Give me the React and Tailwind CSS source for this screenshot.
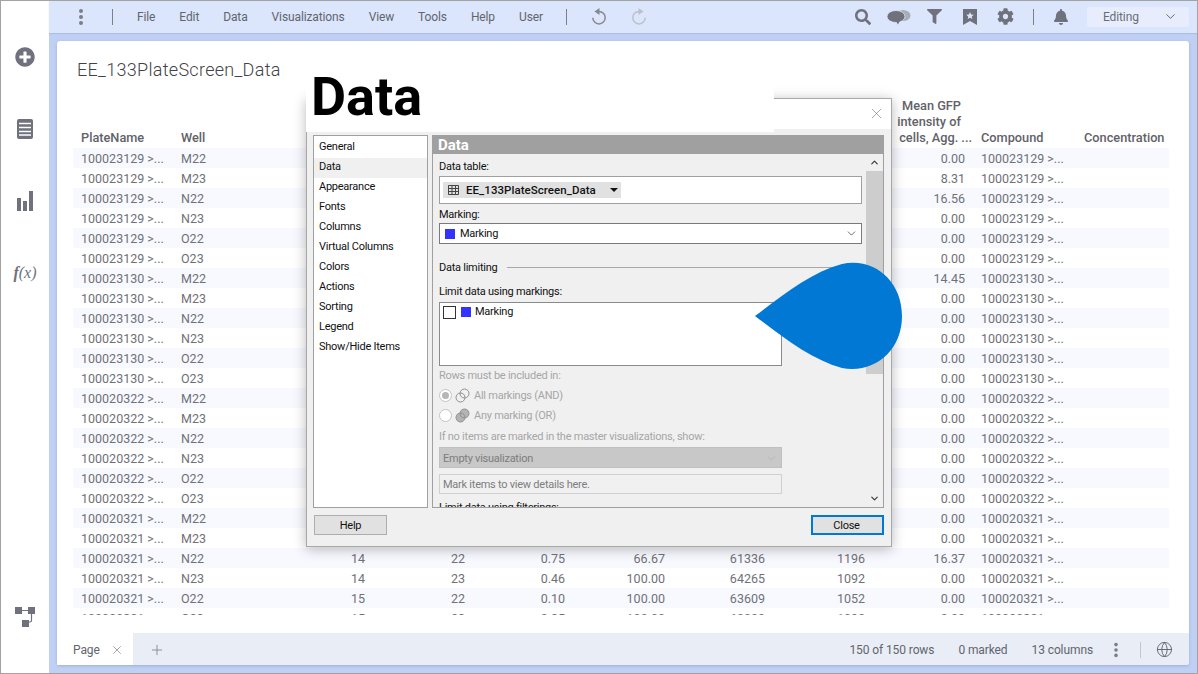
import { ChevronDown, Plus, X, Globe } from "lucide-react";
import { FaSearch, FaFilter, FaCog, FaBell, FaPlusCircle } from "react-icons/fa";

const menus = ["File", "Edit", "Data", "Visualizations", "View", "Tools", "Help", "User"];

const plates = ["100023129", "100023130", "100020322", "100020321"];
const wells = ["M22", "M23", "N22", "N23", "O22", "O23"];
const means = { 1: "8.31", 2: "16.56", 6: "14.45", 20: "16.37" };
const extras = {
  20: ["14", "22", "0.75", "66.67", "61336", "1196"],
  21: ["14", "23", "0.46", "100.00", "64265", "1092"],
  22: ["15", "22", "0.10", "100.00", "63609", "1052"],
  23: ["15", "23", "0.35", "100.00", "60000", "1092"],
};

const rows = [];
plates.forEach((p) => wells.forEach((w) => rows.push({ plate: p, well: w })));

const sections = [
  "General",
  "Data",
  "Appearance",
  "Fonts",
  "Columns",
  "Virtual Columns",
  "Colors",
  "Actions",
  "Sorting",
  "Legend",
  "Show/Hide Items",
];

const gridCols =
  "grid grid-cols-[100px_100px_100px_100px_100px_100px_100px_100px_100px_103px_93px]";

function Dots({ className }) {
  return (
    <div className={"flex flex-col gap-[2px] " + className}>
      <span className="w-[4px] h-[4px] rounded-full bg-[#7b7e87]" />
      <span className="w-[4px] h-[4px] rounded-full bg-[#7b7e87]" />
      <span className="w-[4px] h-[4px] rounded-full bg-[#7b7e87]" />
    </div>
  );
}

function UndoIcon({ className }) {
  return (
    <svg width="16" height="17" viewBox="0 0 16 17" className={className}>
      <path d="M8 3.500a6.200 6.200 0 1 1-6.200 6.200" fill="none" stroke="currentColor" strokeWidth="1.500" />
      <path d="M8.500 0L3.500 3.500l5 3.500z" fill="currentColor" />
    </svg>
  );
}

function Sidebar() {
  return (
    <div className="w-[48px] shrink-0 bg-white flex flex-col items-center pt-[46px] pb-[46px] text-[#6f727c]">
      <FaPlusCircle size={20} />
      <svg width="16" height="20" viewBox="0 0 16 20" className="mt-[52px]">
        <rect width="16" height="20" rx="2" fill="#6f727c" />
        <path d="M2 4.500h12M2 8.500h12M2 12.500h12M2 16h12" stroke="#fff" strokeWidth="1.400" />
      </svg>
      <svg width="16" height="20" viewBox="0 0 16 20" className="mt-[52px]">
        <path d="M0 7h4v13H0zM6 10h4v10H6zM12 0h4v20h-4z" fill="#6f727c" />
      </svg>
      <span className="mt-[52px] font-['Liberation_Serif',serif] italic font-bold text-[16px] leading-[20px]">
        f<span className="font-normal">(x)</span>
      </span>
      <svg width="20" height="20" viewBox="0 0 20 20" className="mt-auto">
        <path d="M0 0h7v7H0zM13 0h7v7h-7zM7 13h7v7H7z" fill="#6f727c" />
        <path d="M7 3.500h6M16.500 7v6.500a1.500 1.500 0 0 1-1.500 1.500h-1" stroke="#6f727c" strokeWidth="1.200" fill="none" />
      </svg>
    </div>
  );
}

function TopBar() {
  return (
    <div className="h-[32px] shrink-0 pb-[1px] bg-[#dbe5fb] flex items-center text-[12px] tracking-[-0.12px] text-[#62656d] font-['Roboto',sans-serif] shadow-[0_1px_1px_rgba(120,140,190,0.25)]">
      <Dots className="ml-[30px]" />
      <div className="ml-[29px] w-px h-[16px] bg-[#7d8087]" />
      <div className="flex gap-[24px] ml-[24px]">
        {menus.map((m) => (
          <span key={m}>{m}</span>
        ))}
      </div>
      <div className="ml-[23px] w-px h-[16px] bg-[#7d8087]" />
      <UndoIcon className="ml-[24px] text-[#85888f]" />
      <UndoIcon className="ml-[24px] -scale-x-100 text-[#bcc0c9]" />
      <div className="ml-auto flex items-center text-[#6f727c]">
        <FaSearch size={16} />
        <svg width="24" height="16" viewBox="0 0 24 16" className="ml-[16px]">
          <ellipse cx="16" cy="6.500" rx="7.500" ry="5.500" fill="#a9adb6" />
          <ellipse cx="9" cy="7.500" rx="9" ry="6" fill="#6f727c" stroke="#dbe5fb" strokeWidth="0.800" />
          <path d="M9 12l2 3.500 2-4z" fill="#6f727c" />
        </svg>
        <FaFilter size={15} className="ml-[16px]" />
        <svg width="14" height="16" viewBox="0 0 14 16" className="ml-[21px]">
          <path d="M0 0h14v16l-7-4-7 4z" fill="#6f727c" />
          <path d="M7 3l1.100 2.400 2.600.3-1.900 1.700.5 2.600L7 8.700 4.700 10l.5-2.600-1.900-1.700 2.600-.3z" fill="#dbe5fb" />
        </svg>
        <FaCog size={17} className="ml-[20px]" />
        <div className="ml-[19px] w-px h-[16px] bg-[#7d8087]" />
        <FaBell size={16} className="ml-[19px]" />
        <div className="ml-[18px] mr-[8px] w-[102px] h-[20px] bg-[#e7edfc] rounded-[2px] flex items-center justify-between pl-[16px] pr-[11px] text-[12px] text-[#6a6d75]">
          <span>Editing</span>
          <ChevronDown size={15} strokeWidth={1.5} className="text-[#5f6269]" />
        </div>
      </div>
    </div>
  );
}

function DataTable() {
  return (
    <div className="ml-[16px] mr-[20px] mt-[16px] h-[518px] overflow-hidden text-[12.5px] text-[#6f7178] font-['Roboto',sans-serif]">
      <div className={gridCols + " h-[51px] items-end font-medium text-[12.75px] text-[#5f6269] leading-[16px] pb-[2px]"}>
        <span className="pl-[8px]">PlateName</span>
        <span className="pl-[8px]">Well</span>
        <span />
        <span />
        <span />
        <span />
        <span />
        <span />
        <div className="text-right whitespace-nowrap">
          <div className="pr-[12px]">Mean GFP</div>
          <div className="pr-[12px]">intensity of</div>
          <div className="pr-[1px]">cells, Agg. ...</div>
        </div>
        <span className="pl-[8px]">Compound</span>
        <span className="pl-[8px]">Concentration</span>
      </div>
      {rows.map((r, i) => {
        const x = extras[i];
        return (
          <div
            key={i}
            className={gridCols + " h-[20px] pt-[1px] items-start leading-[20px] " + (i % 2 === 0 ? "bg-[#f8f9fe]" : "bg-white")}
          >
            <span className="pl-[8px] whitespace-nowrap">{r.plate} &gt;...</span>
            <span className="pl-[8px]">{r.well}</span>
            {x ? (
              <>
                <span className="pr-[8px] text-right">{x[0]}</span>
                <span className="pr-[8px] text-right">{x[1]}</span>
                <span className="pr-[8px] text-right">{x[2]}</span>
                <span className="pr-[8px] text-right">{x[3]}</span>
                <span className="pr-[8px] text-right">{x[4]}</span>
                <span className="pr-[8px] text-right">{x[5]}</span>
              </>
            ) : (
              <span className="col-span-6" />
            )}
            <span className="pr-[8px] text-right">{means[i] || "0.00"}</span>
            <span className="pl-[8px] whitespace-nowrap">{r.plate} &gt;...</span>
            <span />
          </div>
        );
      })}
    </div>
  );
}

function BottomBar() {
  return (
    <div className="mt-auto h-[32px] flex text-[12px] tracking-[-0.1px] text-[#62656d] font-['Roboto',sans-serif]">
      <div className="w-[76px] bg-white flex items-center pl-[16px] pt-[1px]">
        <span>Page</span>
        <X size={14} strokeWidth={1.1} className="ml-[10px] text-[#70737b]" />
      </div>
      <div className="flex-1 bg-[#e9edf6] rounded-br-[3px] flex items-center pt-[1px]">
        <Plus size={16} strokeWidth={1.1} className="ml-[16px] text-[#70737b]" />
        <div className="ml-auto flex items-center">
          <span>150 of 150 rows</span>
          <span className="ml-[24px]">0 marked</span>
          <span className="ml-[24px]">13 columns</span>
          <Dots className="ml-[21px] scale-90" />
          <div className="ml-[22px] w-px h-[16px] bg-[#c3c6ce]" />
          <Globe size={17} strokeWidth={1.3} className="ml-[15px] mr-[16px] text-[#5f6269]" />
        </div>
      </div>
    </div>
  );
}

function Swatch() {
  return <span className="w-[10px] h-[10px] bg-[#3333ff] shrink-0" />;
}

function OverlapIcon({ filled }) {
  return (
    <svg width="15" height="15" viewBox="0 0 15 15" className="shrink-0">
      {filled && <circle cx="9.500" cy="5.500" r="4.500" fill="#b4b4b4" />}
      {filled && <circle cx="5.500" cy="9.500" r="4.500" fill="#b4b4b4" />}
      <circle cx="9.500" cy="5.500" r="4.500" fill="none" stroke="#909090" />
      <circle cx="5.500" cy="9.500" r="4.500" fill="none" stroke="#909090" />
    </svg>
  );
}

function DialogPanel() {
  return (
    <div className="w-[452px] h-[373px] border border-[#a0a0a0] flex flex-col overflow-hidden">
      <div className="h-[18px] shrink-0 bg-[#a0a0a0] text-white font-bold text-[15px] tracking-normal leading-[18px] pl-[5px]">Data</div>
      <div className="flex flex-1 min-h-0">
        <div className="flex-1 min-w-0 overflow-hidden pl-[6px] pt-[5px] pr-[4px] leading-[15px]">
          <div>Data table:</div>
          <div className="mt-[2px] h-[28px] border border-[#a0a0a0] bg-white flex items-center pl-[3px]">
            <div className="w-[178px] h-[16px] bg-[#e1e1e1] flex items-center pl-[5px]">
              <svg width="11" height="10" viewBox="0 0 11 10" className="shrink-0">
                <path d="M.5.500h10v9H.500zM.5 3.500h10M.5 6.500h10M4 .5v9M7.500.5v9" stroke="#444" fill="none" />
              </svg>
              <span className="ml-[7px] font-medium text-[11.5px] tracking-[0.05px] text-[#111]">EE_133PlateScreen_Data</span>
              <span className="ml-auto mr-[3px] border-x-[4px] border-x-transparent border-t-[4px] border-t-[#111]" />
            </div>
          </div>
          <div className="mt-[3px]">Marking:</div>
          <div className="mt-[1px] h-[21px] border border-[#7a7a7a] bg-white flex items-center pl-[5px] pr-[3px]">
            <Swatch />
            <span className="ml-[5px]">Marking</span>
            <ChevronDown size={13} strokeWidth={1.3} className="ml-auto text-[#333]" />
          </div>
          <div className="mt-[16px] flex items-center">
            <span>Data limiting</span>
            <span className="ml-[10px] flex-1 h-px bg-[#a8a8a8]" />
          </div>
          <div className="mt-[9px]">Limit data using markings:</div>
          <div className="mt-[3px] w-[343px] h-[64px] border border-[#8a8a8a] bg-white pl-[3px] pt-[3px] flex items-start">
            <span className="w-[13px] h-[13px] border border-[#333] bg-white shrink-0" />
            <span className="ml-[5px] mt-[1px] flex">
              <Swatch />
            </span>
            <span className="ml-[4px] -mt-[2px]">Marking</span>
          </div>
          <div className="w-[343px] text-[#a6a6a6]">
            <div className="mt-[2px]">Rows must be included in:</div>
            <div className="mt-[5px] h-[15px] flex items-center">
              <span className="w-[13px] h-[13px] rounded-full border border-[#c4c4c4] bg-white flex items-center justify-center shrink-0">
                <span className="w-[7px] h-[7px] rounded-full bg-[#b5b5b5]" />
              </span>
              <span className="ml-[3px] flex"><OverlapIcon /></span>
              <span className="ml-[4px]">All markings (AND)</span>
            </div>
            <div className="mt-[5px] h-[15px] flex items-center">
              <span className="w-[13px] h-[13px] rounded-full border border-[#c4c4c4] bg-white shrink-0" />
              <span className="ml-[3px] flex"><OverlapIcon filled /></span>
              <span className="ml-[4px]">Any marking (OR)</span>
            </div>
            <div className="mt-[6px]">If no items are marked in the master visualizations, show:</div>
            <div className="mt-[3px] h-[21px] pt-[1px] bg-[#c8c8c8] border border-[#c0c0c0] flex items-center pl-[3px] pr-[3px] text-[#7d7d7d]">
              <span>Empty visualization</span>
              <ChevronDown size={13} strokeWidth={1} className="ml-auto text-[#a8a8a8]" />
            </div>
            <div className="mt-[6px] h-[20px] border border-[#d0d0d0] flex items-center pl-[3px] text-[#7d7d7d]">
              Mark items to view details here.
            </div>
          </div>
          <div className="mt-[6px]">Limit data using filterings:</div>
        </div>
        <div className="w-[17px] shrink-0 flex flex-col items-center">
          <span className="h-[17px] flex items-center justify-center text-[#333]">
            <ChevronDown size={11} strokeWidth={2.4} className="rotate-180" />
          </span>
          <span className="w-full h-[203px] bg-[#cdcdcd]" />
          <span className="mt-auto h-[17px] flex items-center justify-center text-[#333]">
            <ChevronDown size={11} strokeWidth={2.4} />
          </span>
        </div>
      </div>
    </div>
  );
}

function Dialog() {
  return (
    <div className="absolute left-[305px] top-[97px] w-[586px] h-[449px] bg-[#f0f0f0] border border-[#a8a8a8] shadow-[0_2px_12px_rgba(0,0,0,0.28)] flex flex-col font-['Roboto',sans-serif] text-[11px] tracking-[-0.25px] text-[#111]">
      <div className="h-[30px] shrink-0 bg-white flex items-center justify-end pr-[6px] pb-[1px]">
        <X size={17} strokeWidth={0.9} className="text-[#777]" />
      </div>
      <div className="h-[6px] shrink-0" />
      <div className="h-[373px] shrink-0 flex pl-[6px]">
        <div className="w-[115px] border border-[#a0a0a0] bg-white pt-[2px]">
          {sections.map((s) => (
            <div
              key={s}
              className={"h-[20px] leading-[18px] pl-[5px] " + (s === "Data" ? "bg-[#f0f0f0]" : "")}
            >
              {s}
            </div>
          ))}
        </div>
        <div className="ml-[4px]">
          <DialogPanel />
        </div>
      </div>
      <div className="flex-1 flex justify-between items-start pt-[7px] pl-[7px] pr-[7px]">
        <div className="w-[73px] h-[20px] bg-[#e1e1e1] border border-[#adadad] text-center leading-[19px]">Help</div>
        <div className="w-[73px] h-[20px] bg-[#e1e1e1] border-2 border-[#0078d7] text-center leading-[17px] pr-[2px]">Close</div>
      </div>
    </div>
  );
}

export default function App() {
  return (
    <div className="relative w-[1198px] h-[674px] overflow-hidden border border-[#a3a3a3] flex bg-[#c0d0f4]">
      <Sidebar />
      <div className="flex-1 flex flex-col min-w-0">
        <TopBar />
        <div className="flex-1 min-h-0 pt-[8px] pl-[8px] pr-[8px] pb-[8px]">
          <div className="h-full bg-white rounded-[3px] flex flex-col shadow-[0_1px_3px_rgba(90,110,170,0.35)]">
            <div className="pt-[18px] pl-[20px] text-[18px] tracking-[0.3px] leading-[22px] font-light text-[#3f4248] font-['Roboto',sans-serif]">
              EE_133PlateScreen_Data
            </div>
            <DataTable />
            <BottomBar />
          </div>
        </div>
      </div>
      <Dialog />
      <div className="absolute left-[305px] top-[69px] w-[468px] h-[62px] bg-white pl-[5px] font-['Roboto',sans-serif] font-bold text-[54px] leading-[54px] text-black">
        Data
      </div>
      <svg width="150" height="110" viewBox="0 0 150 110" className="absolute left-[753px] top-[260px]">
        <path d="M1 55 C 30 33 58 11 88 3 C 120 -4 148 20 148 55 C 148 90 120 113 88 107 C 58 99 30 77 1 55 Z" fill="#0078d4" />
      </svg>
    </div>
  );
}
